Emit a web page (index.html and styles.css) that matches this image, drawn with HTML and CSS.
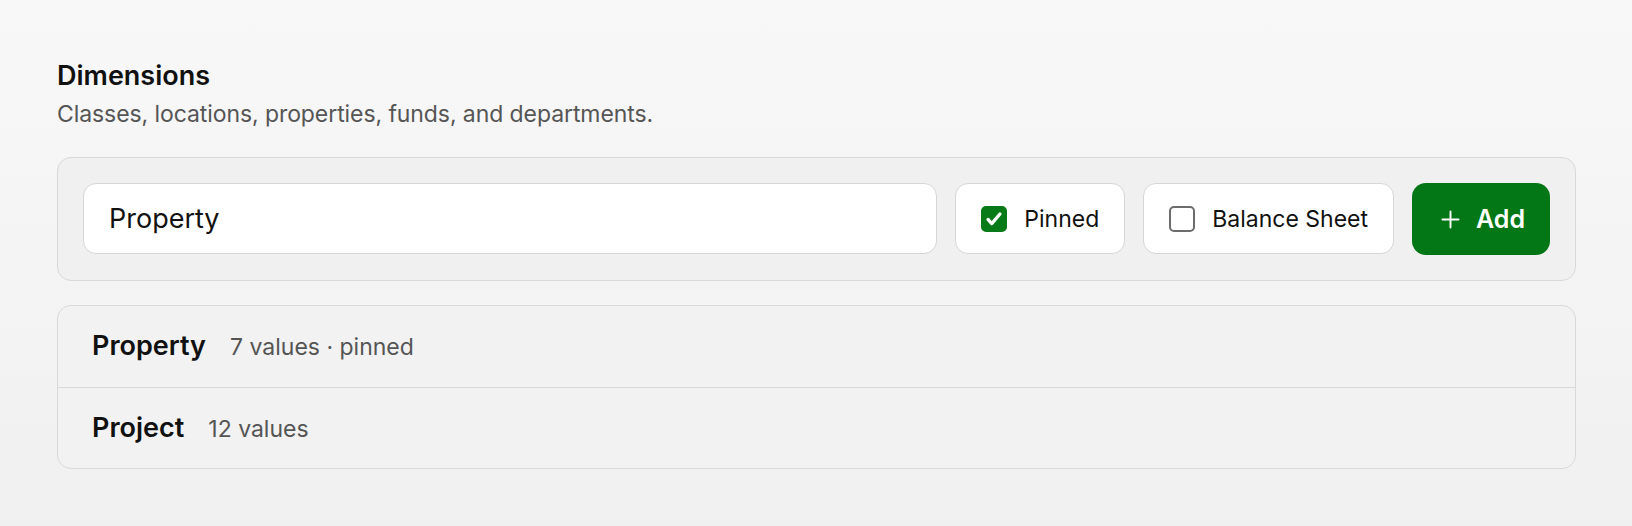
FILE: index.html
```html
<!DOCTYPE html>
<html lang="en">
<head>
<meta charset="utf-8">
<title>Dimensions</title>
<link rel="stylesheet" href="styles.css">
</head>
<body>
<main class="page">
  <section class="dimensions">
    <header class="head">
      <h2 class="title">Dimensions</h2>
      <p class="subtitle">Classes, locations, properties, funds, and departments.</p>
    </header>

    <form class="add-bar" onsubmit="return false">
      <div class="field">
        <input class="name-input" type="text" value="Property" aria-label="Dimension name">
      </div>
      <label class="toggle">
        <span class="box checked">
          <svg viewBox="0 0 24 24" width="22" height="22" aria-hidden="true"><path d="M5.5 12.5l4 4.5L18.5 6.5" fill="none" stroke="#fff" stroke-width="3.6" stroke-linecap="round" stroke-linejoin="round"/></svg>
        </span>
        <span class="toggle-label">Pinned</span>
      </label>
      <label class="toggle">
        <span class="box"></span>
        <span class="toggle-label">Balance Sheet</span>
      </label>
      <button class="add-btn" type="button">
        <svg viewBox="0 0 20 20" width="19" height="19" aria-hidden="true"><path d="M10 1.5v17M1.5 10h17" fill="none" stroke="#fff" stroke-width="2" stroke-linecap="round"/></svg>
        <span>Add</span>
      </button>
    </form>

    <ul class="list">
      <li class="row"><span class="row-name">Property</span><span class="row-meta">7 values · pinned</span></li>
      <li class="row"><span class="row-name">Project</span><span class="row-meta">12 values</span></li>
    </ul>
  </section>
</main>
</body>
</html>
```

FILE: styles.css
```css
* { box-sizing: border-box; }

html, body {
  margin: 0;
  height: 100%;
}

body {
  font-family: Inter, "Noto Sans", "Liberation Sans", sans-serif;
  color: #111;
  background: linear-gradient(180deg, #f8f8f8 0%, #eff0ef 100%);
}

.page {
  padding: 59px 56px 40px 57px;
}

.dimensions {
  display: flex;
  flex-direction: column;
}

.head {
  margin-bottom: 27px;
}

.title {
  margin: 0;
  font-size: 27px;
  font-weight: 600;
  line-height: 34px;
}

.subtitle {
  margin: 6px 0 0;
  font-size: 23px;
  line-height: 31px;
  color: #555;
  letter-spacing: -0.08px;
}

.add-bar {
  display: flex;
  gap: 18px;
  padding: 25px;
  background: #f0f0f0;
  border: 1.5px solid #d9d9d9;
  border-radius: 14px;
  margin: 0 0 24px;
}

.field {
  flex: 1;
  display: flex;
}

.name-input {
  width: 100%;
  height: 71px;
  padding: 0 25px;
  font: inherit;
  font-size: 27px;
  color: #111;
  background: #fff;
  border: 1.5px solid #d6d6d6;
  border-radius: 13px;
  outline: none;
}

.toggle {
  display: flex;
  align-items: center;
  gap: 17px;
  height: 71px;
  padding: 0 25px;
  background: #fff;
  border: 1.5px solid #d6d6d6;
  border-radius: 13px;
  font-size: 23px;
  color: #111;
}

.box {
  width: 26px;
  height: 26px;
  border: 2px solid #6c6c6c;
  border-radius: 5px;
  background: #fff;
  display: flex;
  align-items: center;
  justify-content: center;
  flex: none;
}

.box.checked {
  background: #087a17;
  border-color: #087a17;
}

.add-btn {
  display: flex;
  align-items: center;
  gap: 16px;
  height: 72px;
  padding: 0 25px 0 29px;
  border: none;
  border-radius: 14px;
  background: #037716;
  color: #fff;
  font: inherit;
  font-size: 25px;
  font-weight: 600;
}

.list {
  list-style: none;
  margin: 0;
  padding: 0;
  background: #f1f2f1;
  border: 1.5px solid #d9d9d9;
  border-radius: 14px;
}

.row {
  display: flex;
  align-items: baseline;
  gap: 24px;
  height: 81px;
  padding: 23px 34px 0;
}

.row + .row {
  border-top: 1.5px solid #d9d9d9;
}

.row-name {
  font-size: 27px;
  font-weight: 600;
  color: #111;
}

.row-meta {
  font-size: 23px;
  color: #555;
}
```
